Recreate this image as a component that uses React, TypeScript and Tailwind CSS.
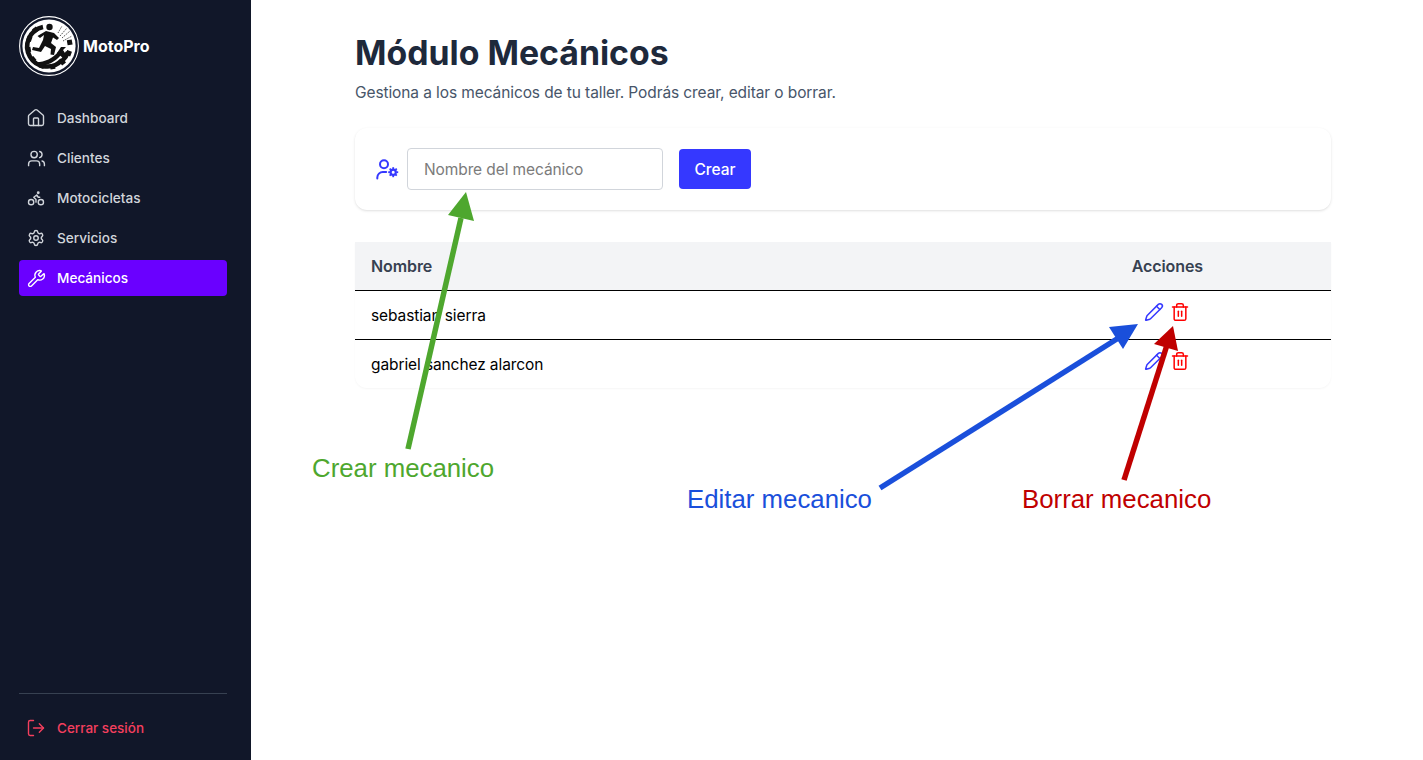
import React from 'react';
import { House, Users, Bike, Settings, Wrench, LogOut, Pencil, Trash2, LucideIcon } from 'lucide-react';

interface NavItem {
  label: string;
  icon: LucideIcon;
  size: number;
  active?: boolean;
}

const NAV_ITEMS: NavItem[] = [
  { label: 'Dashboard', icon: House, size: 20 },
  { label: 'Clientes', icon: Users, size: 19 },
  { label: 'Motocicletas', icon: Bike, size: 18 },
  { label: 'Servicios', icon: Settings, size: 18 },
  { label: 'Mecánicos', icon: Wrench, size: 19, active: true },
];

const MECANICOS = ['sebastian sierra', 'gabriel sanchez alarcon'];

// Logo circular: anillo, engranaje y corredor
function Logo() {
  const teeth = [80, 110, 140, 170, 200, 230, 260, 290, 320];
  return (
    <svg viewBox="0 0 60 60" className="h-[60px] w-[60px] shrink-0">
      <circle cx="30" cy="30" r="29.4" fill="#111729" stroke="#ffffff" strokeWidth="1.1" />
      <circle cx="30" cy="30" r="26.6" fill="#ffffff" />
      {teeth.map((a) => (
        <rect key={a} x="27.5" y="6.5" width="5" height="5" fill="#111111" transform={`rotate(${a} 30 30)`} />
      ))}
      <path d="M43 44 A20 20 0 1 1 24 11" fill="none" stroke="#111111" strokeWidth="4.5" />
      <path d="M49 36 A20 20 0 0 1 43 45" fill="none" stroke="#111111" strokeWidth="4.5" />
      <circle cx="30.5" cy="11" r="3.2" fill="#111111" />
      <path d="M27 15 L35 17 L40 22 L38 24 L34 21.5 L32 27 L37 31 L35 39 L31.5 38.5 L32 33 L26 30 L22 36 L13 34 L14 31 L20 32 L24 24 L25 19 L21 22 L18.5 20 Z" fill="#111111" />
      <path d="M41 20 L48 12 M43 22 L51 15 M44 25 L53 20 M39 17 L43 10" stroke="#444444" strokeWidth="0.9" strokeDasharray="1.5 1" />
      <path d="M15 46 C24 47 33 43 39 36 L42 39 C36 46 28 50 20 50 Z" fill="#111111" />
      <path d="M38 37 L42 31 L47 31 L44 34 L46 37 L49 34 L49 38 L44 42 Z" fill="#111111" />
    </svg>
  );
}

// Usuario con engranaje, cabeza pequeña y engranaje macizo
function UserCogIcon() {
  const teeth = [0, 45, 90, 135, 180, 225, 270, 315];
  return (
    <svg viewBox="0 0 24 24" className="h-6 w-6 shrink-0 text-[#3538ff]" fill="none" stroke="currentColor">
      <circle cx="9" cy="7.3" r="4" strokeWidth="2" />
      <path d="M2.3 21.5 v-1 a5.5 5.5 0 0 1 5.5 -5.5 h3.4" strokeWidth="2" strokeLinecap="round" />
      <circle cx="18.2" cy="15.2" r="2.6" strokeWidth="2.2" />
      {teeth.map((a) => (
        <rect key={a} x="17.3" y="10.2" width="1.8" height="1.8" fill="currentColor" stroke="none" transform={`rotate(${a} 18.2 15.2)`} />
      ))}
    </svg>
  );
}

function Sidebar() {
  return (
    <aside className="flex h-screen w-[251px] shrink-0 flex-col bg-[#111729] pt-4 pr-6 pb-[14px] pl-[19px]">
      <div className="mb-6 flex items-center gap-1">
        <Logo />
        <span className="text-base font-bold text-white">MotoPro</span>
      </div>
      <nav className="flex flex-col gap-1">
        {NAV_ITEMS.map((item) => {
          const Icon = item.icon;
          return (
            <div
              key={item.label}
              className={`flex h-9 items-center rounded pl-[7px] text-[13.6px] font-medium ${
                item.active ? 'bg-[#6a00ff] text-white' : 'text-[#d1d5db]'
              }`}
            >
              <span className="flex w-[31px] justify-start">
                <span className="flex w-5 justify-center">
                  <Icon size={item.size} strokeWidth={1.4} absoluteStrokeWidth />
                </span>
              </span>
              <span>{item.label}</span>
            </div>
          );
        })}
      </nav>
      <div className="mt-auto border-t border-[#374151] pt-4">
        <div className="flex h-9 items-center gap-[11px] px-[7px] text-[13.5px] font-medium text-[#f43f5e]">
          <LogOut size={20} strokeWidth={1.4} absoluteStrokeWidth />
          <span>Cerrar sesión</span>
        </div>
      </div>
    </aside>
  );
}

function MainContent() {
  return (
    <main className="flex-1 pt-[33px] pl-[104px]">
      <div className="w-[976px]">
        <h1 className="text-[33.8px] leading-10 font-bold text-[#1e293b]">Módulo Mecánicos</h1>
        <p className="mt-2 text-[15.5px] leading-6 tracking-[-0.1px] text-[#475569]">Gestiona a los mecánicos de tu taller. Podrás crear, editar o borrar.</p>

        <div className="mt-[23px] flex h-[82px] items-center rounded-xl bg-white pl-5 shadow">
          <UserCogIcon />
          <input
            placeholder="Nombre del mecánico"
            className="ml-2 h-[42px] w-[256px] rounded border border-[#d1d5db] px-4 text-[15.5px] tracking-[-0.1px] placeholder:text-[#7b7b7b]"
          />
          <button className="ml-4 h-10 w-[72px] rounded bg-[#3538ff] pt-0.5 text-[15.5px] font-medium text-white">Crear</button>
        </div>

        <div className="mt-8 rounded-b-xl bg-white shadow-[0_1px_2px_rgba(0,0,0,0.04)]">
          <div className="flex h-[49px] items-center justify-between border-b border-black bg-[#f3f4f6] pr-[128px] pl-4 font-semibold tracking-[-0.1px] text-[#374151]">
            <span>Nombre</span>
            <span>Acciones</span>
          </div>
          {MECANICOS.map((nombre, i) => (
            <div
              key={nombre}
              className={`flex items-center justify-between pr-[141px] pl-4 text-[15.5px] tracking-[-0.1px] text-black ${
                i === 0 ? 'h-[49px] border-b border-black' : 'h-12'
              }`}
            >
              <span className="pt-0.5">{nombre}</span>
              <span className="-mt-[6px] flex items-center gap-[6px]">
                <Pencil size={20} strokeWidth={1.8} className="text-[#3538ff]" />
                <Trash2 size={20} strokeWidth={1.8} className="text-[#ff0000]" />
              </span>
            </div>
          ))}
        </div>
      </div>
    </main>
  );
}

// Anotaciones dibujadas encima de la captura
function Annotations() {
  return (
    <>
      <svg className="pointer-events-none absolute inset-0 h-[760px] w-[1423px]" viewBox="0 0 1423 760">
        <line x1="408" y1="449" x2="461" y2="218" stroke="#4ea72e" strokeWidth="5.5" />
        <polygon points="466,192 474,221 448,215" fill="#4ea72e" />
        <line x1="880" y1="488" x2="1120" y2="337" stroke="#1a4fdb" strokeWidth="5.5" />
        <polygon points="1138,324 1123,349 1109,327" fill="#1a4fdb" />
        <line x1="1124" y1="480" x2="1167" y2="345" stroke="#c00000" strokeWidth="5.5" />
        <polygon points="1173,326 1178,351 1154,344" fill="#c00000" />
      </svg>
      <span className="absolute top-[453px] left-[312px] [font-family:'Liberation_Sans',sans-serif] text-[25.8px] leading-[30px] text-[#4ea72e]">Crear mecanico</span>
      <span className="absolute top-[484px] left-[687px] [font-family:'Liberation_Sans',sans-serif] text-[25.8px] leading-[30px] text-[#1a4fdb]">Editar mecanico</span>
      <span className="absolute top-[484px] left-[1022px] [font-family:'Liberation_Sans',sans-serif] text-[25.8px] leading-[30px] text-[#c00000]">Borrar mecanico</span>
    </>
  );
}

export default function App() {
  return (
    <div className="relative flex h-screen overflow-hidden bg-white [font-family:'Inter',sans-serif]">
      <Sidebar />
      <MainContent />
      <Annotations />
    </div>
  );
}
